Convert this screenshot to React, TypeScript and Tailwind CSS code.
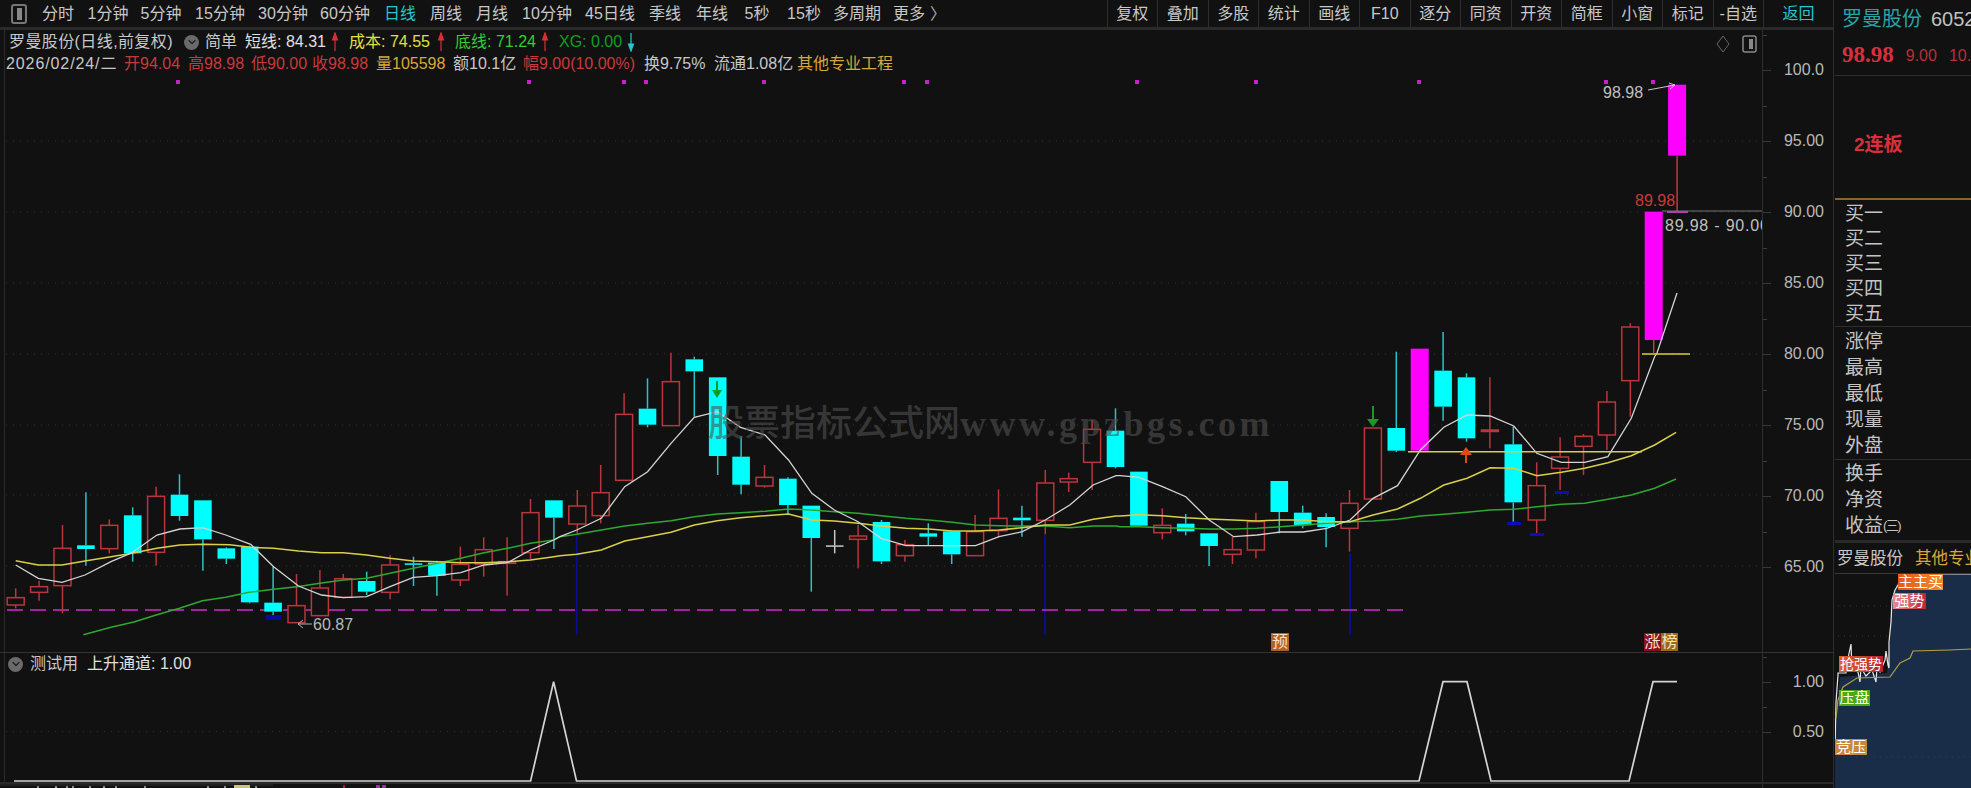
import React from "react";
import { ChevronDown } from "lucide-react";

type Kind = "r" | "c" | "m" | "w";
type Candle = [number, number, number, number, Kind];

// wick top, body top, body bottom, wick bottom. y values are offsets *3 from y=340
const candles: Candle[] = [
  [745, 773, 795, 805, "r"], [722, 740, 757, 782, "r"], [555, 625, 737, 820, "r"], [457, 616, 627, 677, "c"],
  [538, 556, 626, 640, "r"], [502, 526, 640, 665, "c"], [440, 469, 637, 677, "r"], [403, 464, 528, 542, "c"],
  [481, 481, 598, 692, "c"], [622, 625, 656, 672, "c"], [617, 620, 787, 790, "c"], [680, 788, 815, 825, "c"],
  [702, 797, 848, 848, "r"], [690, 744, 827, 827, "r"], [702, 716, 772, 772, "r"], [695, 723, 755, 765, "c"],
  [645, 675, 757, 778, "r"], [650, 670, 674, 738, "c"], [662, 668, 707, 767, "c"], [620, 673, 720, 738, "r"],
  [592, 629, 672, 710, "r"], [592, 665, 670, 767, "r"], [477, 518, 638, 658, "r"], [481, 481, 533, 627, "c"],
  [450, 498, 552, 585, "r"], [375, 458, 527, 550, "r"], [160, 223, 421, 421, "r"], [115, 206, 254, 262, "c"],
  [38, 125, 257, 257, "r"], [50, 58, 94, 230, "c"], [112, 112, 348, 405, "c"], [288, 350, 434, 463, "c"],
  [375, 412, 438, 443, "r"], [412, 416, 495, 525, "c"], [497, 497, 594, 755, "c"], [570, 616, 618, 640, "w"],
  [555, 588, 598, 685, "r"], [540, 546, 664, 672, "c"], [600, 614, 647, 665, "r"], [550, 580, 590, 615, "c"],
  [572, 574, 643, 672, "c"], [525, 575, 647, 647, "r"], [448, 535, 572, 592, "r"], [497, 533, 541, 590, "c"],
  [390, 429, 541, 583, "r"], [398, 416, 426, 456, "r"], [240, 268, 367, 450, "r"], [205, 272, 381, 385, "c"],
  [395, 395, 557, 560, "c"], [505, 556, 578, 598, "r"], [522, 551, 574, 586, "c"], [580, 580, 618, 678, "c"],
  [590, 629, 643, 672, "r"], [518, 545, 630, 655, "r"], [423, 423, 516, 580, "c"], [497, 518, 556, 565, "c"],
  [520, 531, 561, 622, "c"], [450, 490, 565, 635, "r"], [264, 264, 477, 477, "r"], [35, 264, 332, 336, "c"],
  [26, 26, 332, 332, "m"], [-24, 92, 200, 242, "c"], [100, 112, 295, 305, "c"], [112, 270, 273, 325, "r"],
  [260, 313, 487, 545, "c"], [367, 437, 540, 582, "r"], [292, 351, 385, 450, "r"], [282, 289, 319, 405, "r"],
  [153, 186, 285, 330, "r"], [-51, -39, 122, 230, "r"], [-385, -385, 0, 39, "m"], [-766, -766, -553, -385, "m"],
];

const candleX = (i: number) => 15.7 + 23.4 * i;
const py = (z: number) => 340 + z / 3;

// three stretches read from the chart, each with its own x origin
const seg = (off: number, pts: number[][]) => pts.map(([x, y]) => `${(off + x / 2.613).toFixed(1)},${py(y).toFixed(1)}`).join(" ");

const whiteLine = [
  seg(0, [[41, 675], [100, 715], [162, 727], [222, 705], [290, 665], [345, 638], [410, 585], [470, 567], [530, 563], [590, 585], [655, 613], [715, 680], [780, 738], [840, 765], [897, 773], [958, 770], [1019, 740], [1080, 712], [1143, 707], [1204, 698], [1265, 675], [1326, 668], [1386, 630], [1447, 600]]),
  seg(560, [[0, 590], [44, 570], [108, 535], [169, 440], [229, 395], [290, 310], [351, 232], [411, 215], [472, 262], [536, 285], [597, 360], [658, 460], [717, 510], [779, 545], [839, 595], [904, 617], [964, 617], [1025, 617], [1086, 617], [1147, 590], [1208, 575], [1268, 540], [1332, 495], [1393, 435], [1453, 407]]),
  seg(1120, [[0, 407], [50, 412], [111, 440], [172, 470], [233, 540], [297, 590], [358, 585], [419, 576], [479, 576], [540, 565], [601, 540], [661, 475], [725, 437], [785, 330], [846, 262], [907, 225], [967, 228], [1029, 258], [1089, 340], [1153, 367], [1214, 367], [1275, 350], [1336, 235], [1397, 50]]),
  "1657,353 1677,293",
].join(" ");

const yellowLine = [
  seg(0, [[41, 662], [100, 675], [162, 675], [222, 663], [290, 650], [345, 640], [410, 625], [470, 615], [530, 613], [600, 614], [655, 622], [715, 625], [780, 633], [840, 638], [897, 638], [958, 645], [1019, 655], [1080, 663], [1143, 665], [1204, 668], [1265, 668], [1326, 665], [1386, 660], [1447, 650]]),
  seg(560, [[0, 647], [44, 643], [108, 630], [169, 603], [229, 590], [290, 577], [351, 555], [411, 542], [472, 533], [536, 527], [597, 522], [658, 540], [717, 543], [779, 550], [839, 558], [904, 565], [964, 567], [1025, 573], [1086, 573], [1147, 570], [1208, 563], [1268, 555], [1332, 555], [1393, 538], [1453, 528]]),
  seg(1120, [[0, 528], [50, 524], [111, 527], [172, 533], [233, 537], [297, 540], [358, 543], [419, 540], [479, 540], [540, 545], [601, 545], [661, 525], [725, 507], [785, 475], [846, 435], [907, 415], [967, 383], [1029, 385], [1089, 407], [1153, 397], [1214, 385], [1275, 368], [1336, 347], [1397, 315], [1453, 277]]),
].join(" ");

const greenLine = [
  seg(0, [[218, 884], [290, 862], [350, 846], [408, 825], [469, 805], [529, 782], [590, 772], [651, 757], [715, 748], [776, 740], [836, 730], [897, 720], [958, 715], [1019, 700], [1080, 685], [1143, 670], [1204, 655], [1265, 638], [1326, 625], [1386, 610], [1447, 600]]),
  seg(560, [[0, 590], [44, 583], [108, 570], [169, 558], [229, 550], [290, 542], [351, 530], [411, 522], [472, 518], [536, 514], [597, 507], [658, 510], [717, 515], [779, 520], [839, 527], [904, 535], [964, 540], [1025, 547], [1086, 555], [1147, 557], [1208, 558], [1268, 558], [1332, 563], [1393, 558], [1453, 558]]),
  seg(1120, [[0, 560], [50, 560], [111, 563], [172, 565], [233, 567], [297, 567], [358, 565], [419, 560], [479, 555], [540, 550], [601, 545], [661, 543], [725, 538], [785, 528], [846, 523], [907, 517], [967, 510], [1029, 508], [1089, 500], [1153, 493], [1214, 490], [1275, 478], [1336, 465], [1397, 445], [1453, 417]]),
].join(" ");

const dots = [178, 529, 624, 646, 764, 904, 927, 1137, 1256, 1419, 1606, 1653];
const gridY = [141, 212, 283, 354, 425, 495, 566];
const blueLines = [576.7, 1045, 1350];
const specks = [37, 55, 66, 72, 89, 103, 115, 144, 207, 224, 255];

const leftTabs: [string, number][] = [
  ["分时", 40], ["1分钟", 60], ["5分钟", 46], ["15分钟", 72], ["30分钟", 54], ["60分钟", 70], ["日线", 40], ["周线", 52],
  ["月线", 40], ["10分钟", 70], ["45日线", 56], ["季线", 54], ["年线", 40], ["5秒", 50], ["15秒", 44], ["多周期", 62], ["更多", 42],
];
const rightTabs = ["复权", "叠加", "多股", "统计", "画线", "F10", "逐分", "同资", "开资", "简框", "小窗", "标记", "-自选"];
const axisLabels = ["100.0", "95.00", "90.00", "85.00", "80.00", "75.00", "70.00", "65.00"];

const CandleMark = ({ c, i }: { c: Candle; i: number }) => {
  const [wt, bt, bb, wb, kind] = c;
  const x = candleX(i);
  const top = py(wt);
  const bodyTop = py(bt);
  const bodyBot = py(bb);
  const bot = py(wb);
  const color = { r: "#b8363c", c: "#00ffff", m: "#ff00ff", w: "#c8c8c8" }[kind];
  const wick = kind === "c" ? "#2bc4c4" : kind === "m" ? "#c03a4a" : color;
  const h = Math.max(bodyBot - bodyTop, 1.5);
  return (
    <g>
      {top < bodyTop && <line x1={x} x2={x} y1={top} y2={bodyTop} stroke={wick} strokeWidth={1.5} />}
      {bot > bodyBot && <line x1={x} x2={x} y1={bodyBot} y2={bot} stroke={wick} strokeWidth={1.5} />}
      {kind === "r" ? (
        <rect x={x - 8.5} y={bodyTop} width={17} height={h} fill="#111112" stroke={color} strokeWidth={1.5} />
      ) : (
        <rect x={x - (kind === "m" ? 9 : 8.8)} y={bodyTop} width={kind === "m" ? 18 : 17.6} height={h} fill={color} />
      )}
    </g>
  );
};

const RoundChevron = () => (
  <span className="flex h-[15px] w-[15px] items-center justify-center rounded-full bg-[#6a6a6a]">
    <ChevronDown size={12} strokeWidth={2.5} className="text-[#222]" />
  </span>
);

const Arrow = ({ up, color }: { up: boolean; color: string }) => (
  <svg width={18} height={20} viewBox="0 0 18 20" className="shrink-0">
    {up ? (
      <path d="M4 19V4M1.5 8L4 1l2.5 7z" fill={color} stroke={color} strokeWidth={1.2} />
    ) : (
      <path d="M4 1v15M1.5 12L4 19l2.5-7z" fill={color} stroke={color} strokeWidth={1.2} />
    )}
  </svg>
);

const MainChart = () => (
  <svg viewBox="0 30 1762 622" className="absolute inset-0 h-full w-full">
    <line x1={4.5} x2={4.5} y1={30} y2={652} stroke="#2a2a2a" />
    {gridY.map((y) => (
      <line key={y} x1={6} x2={1762} y1={y} y2={y} stroke="#343434" strokeDasharray="1 6" />
    ))}
    {blueLines.map((x) => (
      <line key={x} x1={x} x2={x} y1={x === 1350 ? 553 : 535} y2={635} stroke="#0b0b8e" strokeWidth={2} />
    ))}
    {dots.map((x) => (
      <rect key={x} x={x - 2} y={80} width={4} height={4} fill="#c81fc8" />
    ))}
    <line x1={7} x2={1407} y1={610} y2={610} stroke="#a024a0" strokeWidth={2} strokeDasharray="16 7" />
    {candles.map((c, i) => (
      <CandleMark key={i} c={c} i={i} />
    ))}
    <rect x={266} y={615} width={15} height={5} fill="#0b0b9a" />
    <rect x={1507} y={522} width={14} height={3} fill="#0b0bc0" />
    <rect x={1530} y={533} width={14} height={3} fill="#0b0bc0" />
    <rect x={1555} y={491} width={14} height={3} fill="#0b0bc0" />
    <polyline points={greenLine} fill="none" stroke="#2fa82f" strokeWidth={1.5} />
    <polyline points={yellowLine} fill="none" stroke="#d8cf4a" strokeWidth={1.5} />
    <polyline points={whiteLine} fill="none" stroke="#d4d4d4" strokeWidth={1.3} />
    <line x1={1408} x2={1642} y1={451.7} y2={451.7} stroke="#d8d040" strokeWidth={1.5} />
    <line x1={1642} x2={1690} y1={354} y2={354} stroke="#d8d040" strokeWidth={1.5} />
    <path d="M716 381v9h-4l5 8 5-8h-4v-9z" fill="#0d9a22" />
    <path d="M1372 406v13h-5l6 8 6-8h-5v-13z" fill="#1a9a22" />
    <path d="M1466 447l-6 8h5v8h2v-8h5z" fill="#e0481a" />
    <line x1={1662} x2={1762} y1={211} y2={211} stroke="#777" />
    <line x1={1667} x2={1688} y1={212} y2={212} stroke="#b040b0" strokeWidth={2} />
    <path d="M1648 90l27-5m-6-2l6 2-5 4" fill="none" stroke="#c8c8c8" strokeWidth={1} />
    <path d="M312 624h-14m5-4l-5 4 5 4" fill="none" stroke="#b0b0b0" strokeWidth={1} />
    <g fontSize={16}>
      <text x={313} y={630} fill="#b8b8b8">60.87</text>
      <text x={1603} y={98} fill="#c0c0c0">98.98</text>
      <text x={1635} y={206} fill="#c83a3a">89.98</text>
      <text x={1665} y={231} fill="#c0c0c0" letterSpacing={0.8}>89.98 - 90.00</text>
    </g>
    <path d="M1723 36l6 8-6 8-6-8z" fill="none" stroke="#666" />
    <rect x={1743} y={36} width={13} height={16} rx={2} fill="none" stroke="#888" strokeWidth={1.5} />
    <rect x={1749} y={39} width={4} height={10} fill="#888" />
  </svg>
);

const SubChart = () => (
  <svg viewBox="0 653 1762 129" className="absolute inset-0 h-full w-full">
    <line x1={4.5} x2={4.5} y1={653} y2={782} stroke="#2a2a2a" />
    <line x1={6} x2={1762} y1={731.7} y2={731.7} stroke="#343434" strokeDasharray="1 6" />
    <polyline
      points="14,781 530.6,781 553.6,681.7 576.5,781 1419,781 1443,681.7 1467,681.7 1491,781 1629,781 1653,681.7 1677,681.7"
      fill="none"
      stroke="#d4d4d4"
      strokeWidth={1.7}
    />
  </svg>
);

// top edge of the next pane, only a few pixels of it are on screen
const BottomStrip = () => (
  <div className="flex-1 border-t-2 border-[#2a2a2a]">
    <svg viewBox="0 0 1762 4" className="block h-[4px] w-full">
      <line x1={0} x2={273} y1={1} y2={1} stroke="#303030" />
      {specks.map((x) => (
        <rect key={x} x={x} y={2} width={2} height={2} fill="#8a8a8a" />
      ))}
      <rect x={234} y={1} width={16} height={3} fill="#c8c878" />
      <rect x={343} y={1} width={2} height={3} fill="#a02050" />
      <rect x={376} y={1} width={4} height={3} fill="#a030a0" />
      <rect x={382} y={1} width={4} height={3} fill="#a030a0" />
    </svg>
  </div>
);

const MiniChart = () => (
  <div className="relative flex-1 overflow-hidden">
    <svg viewBox="1835 574 136 214" className="absolute inset-0 h-full w-full">
      <polygon points="1835,753 1837,707 1840,677 1887,673 1890,640 1892,603 1897,583 1917,575 1971,574 1971,788 1835,788" fill="#1a2d48" />
      <line x1={1838} x2={1890} y1={606} y2={606} stroke="#383838" strokeDasharray="1 5" />
      <line x1={1838} x2={1890} y1={636} y2={636} stroke="#383838" strokeDasharray="1 5" />
      <line x1={1838} x2={1971} y1={757} y2={757} stroke="#2c3e58" strokeDasharray="1 5" />
      <polyline
        points="1835,753 1836,702 1838,675 1838,673 1846,673 1846,668 1851,644 1852,670 1858,672 1860,682 1861,668 1866,676 1872,670 1876,682 1877,668 1880,672 1885,660 1886,651 1888,665 1889,668 1889,642 1891,622 1892,600 1895,590 1900,582 1915,575 1925,574 1971,574"
        fill="none"
        stroke="#e8e8e8"
        strokeWidth={1.2}
      />
      <polyline points="1836,718 1838,700 1843,687 1857,678 1890,677 1900,663 1910,658 1913,651 1950,650 1971,649" fill="none" stroke="#b0a040" strokeWidth={1.2} />
    </svg>
    <span className="absolute left-[63px] top-0 h-4 w-[45px] whitespace-nowrap bg-gradient-to-r from-[#e8551a] to-[#ef8a2c] text-center text-[15px] leading-4 text-white">主主买</span>
    <span className="absolute left-[58px] top-[19px] h-4 w-[33px] whitespace-nowrap bg-gradient-to-r from-[#e88a98] to-[#c0202e] text-center text-[15px] leading-4 text-white">强势</span>
    <span className="absolute left-[4px] top-[82px] h-4 w-[44px] whitespace-nowrap bg-gradient-to-r from-[#e06030] to-[#b82030] text-center text-[14px] leading-4 text-white">抢强势</span>
    <span className="absolute left-[4px] top-[116px] h-4 w-[31px] whitespace-nowrap bg-[#4aa812] text-center text-[15px] leading-4 text-white">压盘</span>
    <span className="absolute left-0 top-[165px] h-4 w-[32px] whitespace-nowrap bg-[#c88838] text-center text-[15px] leading-4 text-white">竞压</span>
  </div>
);

const PanelRow = ({ label, h = "h-[25px]" }: { label: React.ReactNode; h?: string }) => (
  <div className={`flex items-center pl-[10px] text-[19px] text-[#c4c4c4] ${h}`}>{label}</div>
);

const App = () => {
  return (
    <div className="flex h-[788px] w-[1971px] overflow-hidden bg-[#111112] font-['Liberation_Sans','Noto_Sans_CJK_SC',sans-serif] text-[16px] text-[#c8c8c8]">
      <div className="flex w-[1833px] flex-col">
        {/* toolbar */}
        <div className="flex h-[30px] shrink-0 items-center border-b-[3px] border-[#2a2a2a]">
          <div className="flex w-[38px] justify-center">
            <span className="flex h-[20px] w-[16px] items-center justify-center rounded-[3px] border-2 border-[#777]">
              <span className="h-[12px] w-[5px] bg-[#888]" />
            </span>
          </div>
          {leftTabs.map(([t, w]) => (
            <div key={t} style={{ width: w }} className={`whitespace-nowrap text-center ${t === "日线" ? "text-[#22c8d0]" : ""}`}>
              <span className="inline-block">{t}</span>
            </div>
          ))}
          <span className="text-[#b0b0b0]">〉</span>
          <div className="flex-1" />
          {rightTabs.map((t) => (
            <div key={t} className="h-full w-[50.5px] whitespace-nowrap border-l border-[#2e2e2e] text-center leading-[27px]">
              {t}
            </div>
          ))}
          <div className="h-full w-[70px] border-l border-[#2e2e2e] text-center leading-[27px] text-[#22c8d0]">返回</div>
        </div>

        <div className="flex flex-1">
          <div className="flex w-[1763px] flex-col border-r border-[#2e2e2e]">
            {/* kline pane */}
            <div className="relative h-[622px] shrink-0">
              <MainChart />
              <div className="absolute left-0 top-px flex h-[22px] items-center whitespace-nowrap pl-[9px]">
                <span className="w-[175px] tracking-[0.4px]">罗曼股份(日线,前复权)</span>
                <span className="flex w-[21px]"><RoundChevron /></span>
                <span className="w-[40px]">简单</span>
                <span className="w-[86px] text-[#e0e0e0]">短线: 84.31</span>
                <Arrow up color="#d83038" />
                <span className="w-[88px] text-[#e0e040]">成本: 74.55</span>
                <Arrow up color="#d83038" />
                <span className="w-[86px] text-[#30d030]">底线: 71.24</span>
                <Arrow up color="#d83038" />
                <span className="w-[68px] text-[#10a020]">XG: 0.00</span>
                <Arrow up={false} color="#22c8d0" />
              </div>
              <div className="absolute left-0 top-[23px] flex h-[22px] items-center whitespace-nowrap pl-[6px]">
                <span className="w-[118px] tracking-[0.9px]">2026/02/24/二</span>
                <span className="w-[64px] text-[#c83a3a]">开94.04</span>
                <span className="w-[63px] text-[#c83a3a]">高98.98</span>
                <span className="w-[61px] text-[#c83a3a]">低90.00</span>
                <span className="w-[64px] text-[#c83a3a]">收98.98</span>
                <span className="w-[77px] text-[#d8a838]">量105598</span>
                <span className="w-[70px]">额10.1亿</span>
                <span className="w-[121px] text-[#c83a3a]">幅9.00(10.00%)</span>
                <span className="w-[70px]">换9.75%</span>
                <span className="w-[83px]">流通1.08亿</span>
                <span className="text-[#d8a838]">其他专业工程</span>
              </div>
              <span className="absolute left-[708px] top-[372px] whitespace-nowrap font-['Liberation_Serif','Noto_Sans_CJK_SC',serif] text-[36px] font-medium leading-[44px] text-[#505050]/60">
                股票指标公式网<span className="font-bold tracking-[3.5px]">www.gpzbgs.com</span>
              </span>
              <span className="absolute left-[1271px] top-[603px] h-[18px] w-[18px] bg-[#b0602a] text-center leading-[18px] text-[#f8e0c8]">预</span>
              <span className="absolute left-[1644px] top-[603px] flex h-[18px] w-[34px] text-center leading-[18px] text-[#f8e0c8]">
                <span className="w-[17px] bg-[#8a1020]">涨</span>
                <span className="w-[17px] bg-[#9a6a18]">榜</span>
              </span>
            </div>
            {/* indicator pane */}
            <div className="relative h-[130px] shrink-0 border-t border-[#333]">
              <SubChart />
              <div className="absolute left-[8px] top-[1px] flex h-[20px] items-center gap-[7px] whitespace-nowrap">
                <RoundChevron />
                <span>测试用</span>
                <span className="ml-[2px] text-[#e0e0e0]">上升通道: 1.00</span>
              </div>
            </div>
            <BottomStrip />
          </div>

          {/* price axis */}
          <div className="flex flex-1 flex-col text-[#b8b8b8]">
            <div className="h-[622px] shrink-0 pt-[4.5px]">
              {axisLabels.map((l) => (
                <div key={l} className="relative flex h-[71px] items-center justify-end pr-[9px]">
                  <i className="absolute left-0 top-1/2 h-px w-2 bg-[#3a3a3a]" />
                  <i className="absolute left-0 top-0 h-px w-1 bg-[#3a3a3a]" />
                  {l}
                </div>
              ))}
            </div>
            <div className="h-[130px] shrink-0 border-t border-[#333] pt-[4px]">
              {["1.00", "0.50"].map((l) => (
                <div key={l} className="relative flex h-[50px] items-center justify-end pr-[9px]">
                  <i className="absolute left-0 top-1/2 h-px w-2 bg-[#3a3a3a]" />
                  <i className="absolute left-0 top-0 h-px w-1 bg-[#3a3a3a]" />
                  {l}
                </div>
              ))}
            </div>
            <div className="flex-1 border-t-2 border-[#2a2a2a]" />
          </div>
        </div>
      </div>

      {/* quote panel */}
      <div className="flex flex-1 flex-col overflow-hidden border-l border-[#2e2e2e] pl-px">
        <div className="h-[76px] shrink-0 overflow-hidden whitespace-nowrap border-b border-[#2e2e2e] pl-[7px]">
          <div className="flex h-[38px] items-center gap-[9px] text-[20px]">
            <span className="text-[#25a5a5]">罗曼股份</span>
            <span className="text-[#c0c0c0]">605289</span>
          </div>
          <div className="flex h-[35px] items-center gap-[12px] text-[#d8303a]">
            <span className="font-['Liberation_Serif',serif] text-[23px] font-bold">98.98</span>
            <span className="text-[#b83038]">9.00</span>
            <span className="text-[#b83038]">10.00%</span>
          </div>
        </div>
        <div className="flex h-[124px] shrink-0 items-start border-b-2 border-[#8a6430] pl-[19px] pt-[55px] text-[19px] font-bold text-[#d8303a]">
          2连板
        </div>
        <div className="h-[127px] shrink-0 border-b border-[#2e2e2e] pt-[2px]">
          {["买一", "买二", "买三", "买四", "买五"].map((t) => (
            <PanelRow key={t} label={t} />
          ))}
        </div>
        <div className="h-[133px] shrink-0 border-b border-[#2e2e2e] pt-[2px]">
          {["涨停", "最高", "最低", "现量", "外盘"].map((t) => (
            <PanelRow key={t} label={t} h="h-[26px]" />
          ))}
        </div>
        <div className="h-[83px] shrink-0 border-b-[3px] border-[#2a2a2a] pt-[1px]">
          <PanelRow label="换手" h="h-[26px]" />
          <PanelRow label="净资" h="h-[26px]" />
          <PanelRow
            label={
              <>
                收益<span className="text-[13px] tracking-[-1.5px]">(三)</span>
              </>
            }
            h="h-[26px]"
          />
        </div>
        <div className="flex h-[31px] shrink-0 items-center gap-[12px] whitespace-nowrap border-b border-[#3a3a3a] pl-[2px] text-[16.5px]">
          <span>罗曼股份</span>
          <span className="text-[#d8a838]">其他专业工程</span>
        </div>
        <MiniChart />
      </div>
    </div>
  );
};

export default App;
